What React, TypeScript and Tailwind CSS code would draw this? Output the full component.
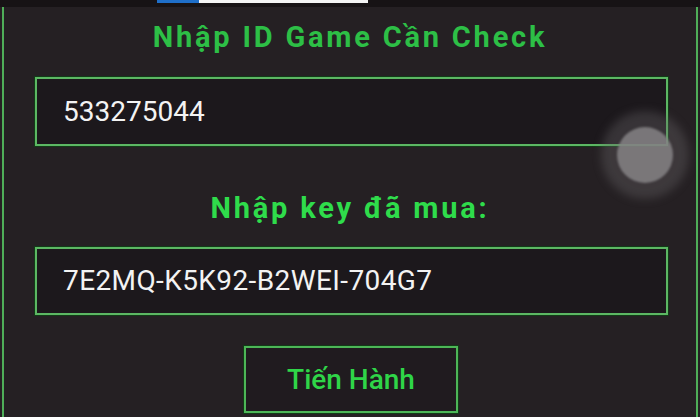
export default function App() {
  return (
    <div
      className="relative w-[700px] h-[417px] overflow-hidden bg-[#252023] flex flex-col"
      style={{ fontFamily: "Roboto, 'Noto Sans', sans-serif" }}
    >
      {/* blurred top strip with progress bar */}
      <div className="h-[7px] bg-[#171315] flex flex-col">
        <div className="flex h-[3px] pl-[157px]">
          <div className="w-[42px] bg-[#1f6fc9]" />
          <div className="w-[169px] bg-[#f4f4f4]" />
        </div>
      </div>

      <div className="flex-1 mx-[2px] border-x-2 border-[#4fae58] flex flex-col items-center">
        <h1 className="mt-[13px] text-[29px] leading-[34px] font-bold tracking-[2.8px] text-[#2dbf46]">
          Nhập ID Game Cần Check
        </h1>

        <div className="mt-[23px] self-start ml-[31px] w-[633px] h-[69px] border-2 border-[#5cb763] shadow-[0_0_0_1px_#123b17] bg-[#1c181c] flex items-center pl-[26px]">
          <span className="text-[28px] text-[#f3f3f3]">533275044</span>
        </div>

        <h2 className="mt-[45px] text-[29px] leading-[34px] font-bold tracking-[2.8px] text-[#2fdc4b]">
          Nhập key đã mua:
        </h2>

        <div className="mt-[22px] self-start ml-[31px] w-[633px] h-[68px] border-2 border-[#5cb763] shadow-[0_0_0_1px_#123b17] bg-[#1c181c] flex items-center pl-[26px]">
          <span className="text-[28px] tracking-[0.4px] text-[#f3f3f3]">7E2MQ-K5K92-B2WEI-704G7</span>
        </div>

        <button className="mt-[31px] ml-[2px] w-[214px] h-[67px] border-2 border-[#4db657] shadow-[0_0_0_1px_#123b17] bg-[#201b1f] flex items-center justify-center text-[28px] font-medium text-[#2fd548]">
          Tiến Hành
        </button>
      </div>

      {/* floating touch indicator */}
      <div className="absolute left-[601px] top-[111px] w-[88px] h-[88px] rounded-full bg-[#6a676a]/35 blur-[4px]" />
      <div className="absolute left-[617px] top-[127px] w-[56px] h-[56px] rounded-full bg-[#858285]/85 blur-[1px]" />
    </div>
  );
}
